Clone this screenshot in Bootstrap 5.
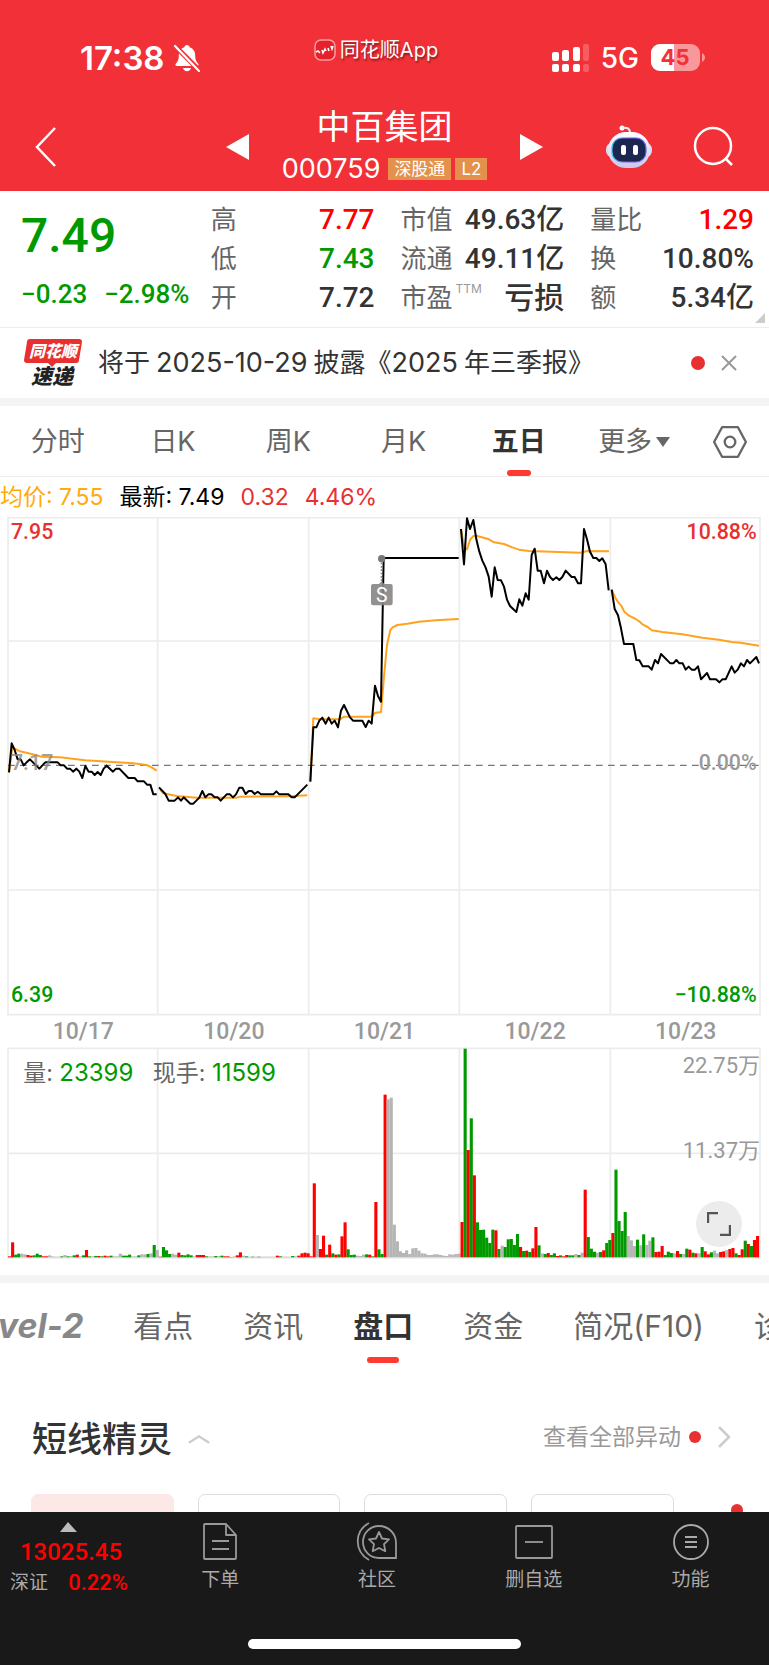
<!DOCTYPE html>
<html lang="zh-CN">
<head>
<meta charset="utf-8">
<meta name="viewport" content="width=device-width, initial-scale=1">
<title>中百集团 000759</title>
<link rel="stylesheet" href="https://cdn.jsdelivr.net/npm/bootstrap@5.3.0/dist/css/bootstrap.min.css">
<style>
:root{--up:#f00;--down:#090;--brand:#f23037;--ink:#333;--muted:#666;--soft:#999;--rule:#ececec}
body{font-family:Inter,"Noto Sans CJK SC",sans-serif;color:var(--ink);background:#fff;overflow-x:hidden}
button{background:none;border:0;padding:0;color:inherit;font:inherit}
svg{display:block}
svg text{font-family:Roboto,"Noto Sans CJK SC",sans-serif}
svg text.lbl{font-family:Inter,"Noto Sans CJK SC",sans-serif}
a{color:inherit;text-decoration:none}
.num{font-family:Roboto,"Noto Sans CJK SC",sans-serif;font-weight:500}
.up{color:var(--up)}.down{color:var(--down)}
.app-head{background:var(--brand);color:#fff}
.status{height:96px;padding:20px 63px 0 80px;display:grid;grid-template-columns:1fr auto 1fr}
.clock{font-size:33px;font-weight:600;line-height:40px}
.brandline{font-size:20px;line-height:24px;margin:0 34px 16px 0;text-shadow:1px 2px 2px rgba(0,0,0,.45)}
.net{font-size:28px;font-weight:500;line-height:32px}
.signals{gap:12px}
.titlebar{height:95px;padding:7px 34px 0;display:grid;grid-template-columns:1fr auto 1fr}
.switcher{width:318px}
.stock{font-size:34px;line-height:44px;font-weight:400;margin:0}
.code{font-size:27px;line-height:40px}
.tagbox{background:#e4924b;font-size:17px;line-height:22px;padding:0 6px}
.quote{display:grid;grid-template-columns:repeat(4,minmax(0,1fr));column-gap:26px;padding:9px 15px 10px 21px;border-bottom:1px solid var(--rule);position:relative}
.quote dl{margin:0}
.quote dl>div{height:39px;display:flex;justify-content:space-between;align-items:center;white-space:nowrap}
.quote dt{font-weight:400;font-size:26px;color:var(--muted);line-height:39px}
.quote dd{margin:0;font-size:28px;line-height:39px}
.quote dd.wordy{font-size:30px}
.price{font-size:48px;line-height:72px}
.change{font-size:26px;line-height:45px;white-space:nowrap;gap:17px}
.ttm{font-size:12px;color:var(--soft);top:-14px;margin-left:3px}
.corner{position:absolute;right:4px;bottom:4px}
.notice{height:70px;padding:0 32px 0 24px;font-size:26px}
.digits{font-size:27px;margin:0 6px}
.dot{width:14px;height:14px;border-radius:50%;background:#e93030;flex:none}
.dot-sm{width:12px;height:12px}
.band{height:8px;background:#f4f4f4}
.periods{height:71px;border-bottom:1px solid var(--rule);font-size:27px;color:var(--muted)}
.periods button{flex:115 1 0;height:70px;padding-top:2px;position:relative}
.periods .gear{flex-grow:77}
.active-tab{color:var(--ink);font-weight:700!important}
.active-tab::after{content:"";position:absolute;left:50%;bottom:0;width:24px;height:6px;margin-left:-12px;border-radius:3px;background:#ff3a30}
.legendline{height:40px;font-size:23px;line-height:40px;gap:16px}
.crimson{color:#e93030}.amber{color:#ffab0c}
.dates{height:30px;padding:0 8px;font-size:23px;line-height:30px;color:var(--soft)}
.expand{position:absolute;right:27px;bottom:12px;width:46px;height:46px;border-radius:50%;background:#ececec!important}
.sections{height:96px;gap:50px;font-size:30px;line-height:86px;color:var(--muted);overflow:hidden;white-space:nowrap}
.sections a{position:relative;height:80px}
.sections .active-tab::after{width:32px;margin-left:-16px}
.levelname{font-size:34px;font-weight:700;font-style:italic;color:#888;margin-left:-41px}
.spirit{height:115px;padding:36px 38px 0 32px}
.spirit h2{font-size:35px;font-weight:500;margin:0;line-height:48px}
.more{font-size:23px;color:var(--soft);line-height:44px}
.strip{height:18px;overflow:hidden;padding:0 26px 0 31px}
.chip{flex:143 1 0;height:80px;border:1px solid #ddd;border-radius:7px}
.chip.on{background:#fde8e8;border-color:#fde8e8}
.tail{flex:46 1 0;height:80px;padding-top:10px}
.tabbar{background:#191919;color:#aaa;height:153px;font-size:19px}
.tabs a,.tabs button{flex:1;display:flex;flex-direction:column;align-items:center;height:90px;padding-top:10px}
.tabs svg{height:39px;margin-bottom:5px}
.index{width:142px;height:84px;padding-top:10px}
.index svg{height:10px;margin-left:60px}
.points{font-size:24px;line-height:24px}
.indexrow{padding:5px 14px 0 10px;line-height:28px}
.indexrow .num{font-size:22px}
.home{width:273px;height:10px;border-radius:5px;background:#fff;margin:37px auto 0}
</style>
<script src="https://cdn.jsdelivr.net/npm/bootstrap@5.3.0/dist/js/bootstrap.bundle.min.js"></script>
</head>
<body>
<header class="app-head">
  <div class="status align-items-center">
    <div class="d-flex align-items-center gap-2">
      <span class="clock">17:38</span>
      <svg width="28" height="30" viewBox="0 0 28 30"><path fill="#fff" d="M14 2c-1.500 0-2.400 1-2.600 2.200C7.500 5.500 5.800 8.600 5.800 12.500c0 5-1.600 6.600-3 8.200-.8 1-.3 2.300 1 2.300h20.400c1.300 0 1.800-1.300 1-2.300-1.400-1.600-3-3.200-3-8.200 0-3.900-1.700-7-5.600-8.300C16.400 3 15.500 2 14 2zM10 25h8c-.4 2-2 3.200-4 3.200S10.400 27 10 25z"/><path stroke="#f23037" stroke-width="5" d="M1 2l26 26"/><path stroke="#fff" stroke-width="2.200" stroke-linecap="round" d="M2 3l24 25"/></svg>
    </div>
    <div class="brandline d-flex align-items-center gap-1">
      <svg width="22" height="22" viewBox="0 0 22 22"><rect x="1" y="1" width="20" height="20" rx="6" fill="#e8202a" stroke="#f5a0a3" stroke-width="1.500"/><path fill="none" stroke="#fff" stroke-width="1.600" d="M2 13l2-1 2 2M8 11l1 3 2-4 1 2M14 9l1 3M17 7l1 3 1-3"/></svg>
      <span>同花顺App</span>
    </div>
    <div class="signals d-flex align-items-center justify-content-end">
      <svg width="37" height="28" viewBox="0 0 37 28" fill="#fff"><rect y="8" width="7" height="9" rx="2"/><rect x="10" y="6" width="7" height="11" rx="2"/><rect x="21" y="3" width="7" height="14" rx="2"/><rect x="31" width="6" height="17" rx="2" opacity=".22"/><rect y="20" width="7" height="8" rx="2"/><rect x="10" y="20" width="7" height="8" rx="2"/><rect x="21" y="20" width="7" height="8" rx="2"/><rect x="31" y="20" width="6" height="8" rx="2" opacity=".22"/></svg>
      <span class="net">5G</span>
      <svg width="55" height="28" viewBox="0 0 55 28"><defs><clipPath id="cell"><rect width="49" height="27" rx="9"/></clipPath></defs><g clip-path="url(#cell)"><path fill="#f9989b" d="M0 0h49v27H0z"/><path fill="#fff" d="M0 0h23v27H0z"/></g><path fill="#f9989b" d="M51 9c4 2 4 7 0 9z"/><text class="lbl" x="24" y="21" text-anchor="middle" font-size="22" font-weight="700" fill="#f23037">45</text></svg>
    </div>
  </div>
  <div class="titlebar align-items-center">
    <button class="text-start" aria-label="返回"><svg width="24" height="40" viewBox="0 0 24 40"><path d="M21 1L3 20l18 19" fill="none" stroke="#fff" stroke-width="2.500"/></svg></button>
    <div class="switcher d-flex justify-content-between align-items-center">
      <button aria-label="上一只"><svg width="23" height="26"><path fill="#fff" d="M23 0v26L0 13z"/></svg></button>
      <div class="text-center">
        <h1 class="stock">中百集团</h1>
        <div class="d-flex align-items-center"><span class="code me-2">000759</span><span class="tagbox me-1">深股通</span><span class="tagbox">L2</span></div>
      </div>
      <button aria-label="下一只"><svg width="23" height="26"><path fill="#fff" d="M0 0v26l23-13z"/></svg></button>
    </div>
    <div class="d-flex justify-content-end align-items-center gap-4">
      <button class="me-3" aria-label="智能助手"><svg width="48" height="44" viewBox="0 0 48 44"><defs><linearGradient id="shell" x2="0" y2="1"><stop stop-color="#fff"/><stop offset="1" stop-color="#c9c8ee"/></linearGradient><linearGradient id="edge"><stop stop-color="#38c5e8"/><stop offset=".5" stop-color="#8b4bef"/><stop offset="1" stop-color="#5b6bf2"/></linearGradient></defs><circle cx="17" cy="3" r="2.500" fill="#fff"/><path d="M17 3c6-1 8 1 8 5" fill="none" stroke="#eeeefb" stroke-width="2"/><rect x="1" y="18" width="46" height="14" rx="6" fill="#d9d9f5"/><rect x="3" y="7" width="42" height="36" rx="18" fill="url(#shell)"/><rect x="7" y="13" width="34" height="24" rx="10" fill="#1c2750" stroke="url(#edge)" stroke-width="1.200"/><rect x="16" y="20" width="5" height="10" rx="2" fill="#fff"/><rect x="28" y="20" width="5" height="10" rx="2" fill="#fff"/></svg></button>
      <button aria-label="搜索"><svg width="42" height="42" viewBox="0 0 42 42" fill="none" stroke="#fff" stroke-width="2.500"><circle cx="20" cy="20" r="18"/><path d="M32 32l7 7"/></svg></button>
    </div>
  </div>
</header>

<main>
<section class="quote">
  <div class="num down"><div class="price">7.49</div><div class="change d-flex"><span>−0.23</span><span>−2.98%</span></div></div>
  <dl><div><dt>高</dt><dd class="num up">7.77</dd></div><div><dt>低</dt><dd class="num down">7.43</dd></div><div><dt>开</dt><dd class="num">7.72</dd></div></dl>
  <dl><div><dt>市值</dt><dd class="num">49.63亿</dd></div><div><dt>流通</dt><dd class="num">49.11亿</dd></div><div><dt>市盈<sup class="ttm">TTM</sup></dt><dd class="num wordy">亏损</dd></div></dl>
  <dl><div><dt>量比</dt><dd class="num up">1.29</dd></div><div><dt>换</dt><dd class="num">10.80%</dd></div><div><dt>额</dt><dd class="num">5.34亿</dd></div></dl>
  <svg class="corner" width="10" height="10"><path fill="#ccc" d="M10 0v10H0z"/></svg>
</section>

<section class="notice d-flex align-items-center">
  <svg width="58" height="50" viewBox="0 0 58 50"><path fill="#e93030" d="M6 1h49q3 0 3 3l-3 18q0 3-3 3H32l-4 4-4-4H3q-3 0-3-3L3 4q0-3 3-3z"/><text x="29" y="19" text-anchor="middle" font-size="16" font-weight="900" font-style="italic" fill="#fff">同花顺</text><text x="28" y="46" text-anchor="middle" font-size="21" font-weight="900" font-style="italic" fill="#222">速递</text></svg>
  <a href="#notice" class="ms-3 flex-grow-1">将于<span class="digits">2025-10-29</span>披露《<span class="digits ms-0">2025</span>年三季报》</a>
  <span class="dot me-3"></span>
  <button aria-label="关闭"><svg width="16" height="16"><path d="M1 1l14 14M15 1L1 15" stroke="#999" stroke-width="2"/></svg></button>
</section>
<div class="band"></div>

<nav class="periods d-flex">
  <button>分时</button><button>日K</button><button>周K</button><button>月K</button><button class="active-tab">五日</button>
  <button class="d-flex align-items-center justify-content-center">更多<svg class="ms-1" width="14" height="10"><path fill="#666" d="M0 0h14L7 10z"/></svg></button>
  <button class="gear d-flex align-items-center justify-content-center" aria-label="设置"><svg width="36" height="34" viewBox="0 0 34 32" fill="none" stroke="#666" stroke-width="2.200"><path stroke-linejoin="round" d="M9.500 2h15L32 16l-7.500 14h-15L2 16z"/><circle cx="17" cy="16" r="5"/></svg></button>
</nav>

<div class="legendline d-flex"><span class="amber">均价: 7.55</span><span class="text-black">最新: 7.49</span><span class="crimson">0.32</span><span class="crimson">4.46%</span></div>

<svg viewBox="0 21 2307 1500" width="100%" role="img" aria-label="五日价格走势">
  <path fill="none" stroke="#ececec" stroke-width="5" d="M24 23H2280V1514H24zM473 23V1514M926 23V1514M1378 23V1514M1831 23V1514M24 393H2280M24 1140H2280"/>
  <path stroke="#777" stroke-width="4" stroke-dasharray="20 16" d="M24 766H2280"/>
  <g fill="none" stroke="#ffa31f" stroke-width="6" stroke-linejoin="round">
    <path d="M27 787L37 712 60 724 95 732 125 740 180 742 255 751 400 760 440 765 455 772 470 782"/>
    <path d="M480 838L490 850 530 858 590 863 710 863 720 860 870 859 922 856"/>
    <path d="M931 815L940 625 960 628 1020 628 1032 620 1115 620 1125 609 1143 606 1152 500 1161 405 1171 360 1178 352 1192 345 1222 341 1257 335 1307 331 1376 327"/>
    <path transform="translate(1107)" d="M276 57L285 110 294 118 303 90 312 79 322 77 360 88 375 97 405 102 430 112 450 119 480 123 635 128 655 123 720 124M728 239L740 265 748 278 756 286 766 305 780 317 800 327 812 335 822 344 836 351 848 361 880 366 940 373 1000 383 1050 389 1088 396 1115 398 1170 407"/>
  </g>
  <g fill="none" stroke="#000" stroke-width="6" stroke-linejoin="round">
    <path d="M27 787L35 700 44 720 53 748 62 748 71 766 80 757 90 748 99 757 108 766 118 776 136 757 173 757 182 766 192 766 201 776 210 776 219 785 229 776 238 785 247 804 256 768 266 785 275 785 284 795 293 786 302 795 311 776 320 767 339 785 348 776 358 776 385 804 404 804 413 814 432 814 441 824 451 824 460 853 470 853"/>
    <path d="M477 832L496 852 506 872 524 872 534 862 543 872 551 862 571 881 580 881 598 863 607 843 616 862 625 853 634 853 644 862 653 862 662 872 680 853 690 853 699 862 708 853 718 833 727 833 737 852 746 843 755 843 764 852 773 845 783 853 820 853 829 844 838 853 865 853 875 862 884 862 922 824"/>
    <path d="M931 815L940 652 949 652 958 632 967 623 977 641 986 623 995 641 1004 632 1014 652 1023 602 1032 585 1050 622 1059 632 1087 632 1097 651 1106 632 1115 641 1125 527 1134 558 1143 575 1151 144 1376 144"/>
    <path transform="translate(1107)" d="M276 57L285 163 294 25 303 57 313 30 322 88 331 125 340 152 350 173 359 200 368 260 377 172 386 210 396 211 405 230 414 269 423 288 442 306 451 268 460 287 470 250 479 269 488 135 497 116 506 182 515 182 525 220 534 182 543 201 552 210 562 202 571 210 580 201 590 182 608 201 617 201 627 220 636 220 645 57 654 88 663 125 673 144 682 144 691 153 700 145 710 163 719 241M728 239L737 297 747 316 756 355 765 402 793 402 802 450 811 451 821 469 839 469 848 479 858 450 867 460 876 432 904 460 913 460 922 450 931 460 941 460 950 479 959 470 968 479 978 479 987 469 996 508 1014 489 1023 508 1041 508 1051 517 1060 508 1070 508 1088 469 1097 488 1106 479 1116 460 1125 469 1134 450 1143 460 1162 441 1170 460"/>
  </g>
  <circle cx="1145" cy="146" r="11" fill="#777"/><path stroke="#888" stroke-width="4" stroke-dasharray="5 5" d="M1144 158V216"/>
  <path fill="#888" fill-opacity=".92" d="M1119 222h18l8-8 8 8h19q6 0 6 6v52q0 6-6 6h-53q-6 0-6-6v-52q0-6 6-6z"/>
  <text x="1145" y="275" text-anchor="middle" font-size="58" fill="#fff">S</text>
  <g font-size="64" font-weight="500">
    <text x="33" y="88" fill="#e93030">7.95</text><text x="2270" y="88" text-anchor="end" fill="#e93030">10.88%</text>
    <text x="33" y="780" fill="#888" fill-opacity=".8">7.17</text><text x="2270" y="780" text-anchor="end" fill="#999">0.00%</text>
    <text x="33" y="1475" fill="#090">6.39</text><text x="2270" y="1475" text-anchor="end" fill="#090">−10.88%</text>
  </g>
</svg>
<div class="dates num d-flex text-center"><span class="col">10/17</span><span class="col">10/20</span><span class="col">10/21</span><span class="col">10/22</span><span class="col">10/23</span></div>
<div class="position-relative">
  <svg viewBox="0 200 2307 636" width="100%" role="img" aria-label="成交量">
    <path fill="none" stroke="#ececec" stroke-width="5" d="M24 204H2280V833H24zM473 204V833M926 204V833M1378 204V833M1831 204V833M24 519H2280"/>
    <g id="volume"></g>
    <g font-size="69" fill="#666"><text class="lbl" x="70" y="301">量:</text><text class="lbl" x="458" y="301">现手:</text></g>
    <g font-size="72" fill="#090"><text class="lbl" x="178" y="301">23399</text><text class="lbl" x="636" y="301">11599</text></g>
    <g font-size="66" fill="#999" text-anchor="end"><text x="2280" y="279">22.75万</text><text x="2280" y="533">11.37万</text></g>
  </svg>
  <button class="expand" aria-label="全屏"><svg class="m-auto" width="24" height="24" viewBox="0 0 24 24" fill="none" stroke="#555" stroke-width="2.400"><path d="M1 11V1h10M23 13v10H13"/></svg></button>
</div>
<div class="band mt-3"></div>

<nav class="sections d-flex">
  <a class="levelname" href="#l2">Level-2</a><a href="#view">看点</a><a href="#news">资讯</a><a href="#pan" class="active-tab">盘口</a><a href="#fund">资金</a><a href="#f10">简况(F10)</a><a href="#diag">诊股</a>
</nav>
<section class="spirit d-flex justify-content-between align-items-start">
  <div class="d-flex align-items-center gap-3"><h2>短线精灵</h2><svg width="22" height="10" viewBox="0 0 24 10"><path d="M1 9l11-7 11 7" fill="none" stroke="#ccc" stroke-width="2.500"/></svg></div>
  <a href="#all" class="more d-flex align-items-center">查看全部异动<span class="dot dot-sm mx-2"></span><svg class="ms-2" width="14" height="22"><path d="M2 1l10 10L2 21" fill="none" stroke="#ccc" stroke-width="2.500"/></svg></a>
</section>
<div class="strip d-flex gap-4"><div class="chip on"></div><div class="chip"></div><div class="chip"></div><div class="chip"></div><div class="tail d-flex justify-content-end"><span class="dot dot-sm"></span></div></div>
</main>

<footer class="tabbar">
  <div class="tabs d-flex">
    <div class="index">
      <svg width="17" height="10" class="mb-2"><path fill="#bbb" d="M8 0l9 10H0z"/></svg>
      <div class="points num up text-center">13025.45</div>
      <div class="indexrow d-flex justify-content-between align-items-center"><span>深证</span><span class="num up">0.22%</span></div>
    </div>
    <a href="#order"><svg width="36" viewBox="0 0 36 39" fill="none" stroke="#999" stroke-width="1.800"><path stroke-linejoin="round" d="M4 2h20l10 11v23q0 1-1 1H3q-1 0-1-1V3q0-1 1-1zM24 2v11h10"/><path d="M10 19h17M10 27h17"/></svg>下单</a>
    <a href="#club"><svg width="42" viewBox="0 0 42 39" fill="none" stroke="#999" stroke-width="1.800"><path d="M23 4c9 0 17 7 17 17v15H23C14 36 7 29 7 20S14 4 23 4z"/><path d="M13 1C-2 9-2 29 13 38"/><path stroke-linejoin="round" d="M23 10l3 6.500 7 .8-5 4.900 1.300 7L23 26l-6.300 3.200 1.300-7-5-4.900 7-.8z"/></svg>社区</a>
    <button><svg width="40" viewBox="0 0 40 39" fill="none" stroke="#999" stroke-width="1.800"><rect x="2" y="4" width="36" height="32" rx="1"/><path d="M11 20h18"/></svg>删自选</button>
    <button><svg width="38" viewBox="0 0 38 39" fill="none" stroke="#aaa" stroke-width="1.800"><circle cx="19" cy="20" r="17"/><path d="M13 15h12M13 20h12M13 25h12"/></svg>功能</button>
  </div>
  <div class="home"></div>
</footer>
<script>
/* one entry per five-minute bar: colour letter (r up, g down, x flat) and height */
const bars = `r3 r45 g8 g11 x11 x9 r7 r5 g6 g11 g7 r3 r3 x6 x3 x2 x2 g3 x7 g3 x4 g6 r8 x3 g6 r22 g3 x3 g4 r4 g3 r5 r3 g5 x3 x3 x11 g5 g5 g8 x3 x3 g6 x9 x9 g10 x12 g37 x22
r2 g31 g21 g10 x11 x8 r14 g7 g6 g9 g6 x3 r7 r7 r7 g3 x3 x3 g4 x4 g5 r3 r3 g1 x3 r6 r15 x5 g3 x2 g2 x2 g2 x2 x2 x2 x2 x2 r5 g3 x2 x2 x2 g4 x3 r5 r12 r14 r12
r3 r222 x67 r25 r65 g8 r38 g12 r8 g9 r63 r105 g24 g7 g8 x5 x4 x8 g9 r8 g3 r166 g24 g10 r488 x474 x479 x98 x48 x18 x13 x21 x10 x27 x28 x20 x12 x11 x7 x7 x9 x9 x7 x5 x4 x9 x8 x10 x11
r106 g626 r322 g417 r246 g105 g82 g83 g59 g43 g83 r81 g25 x35 g31 g54 g55 g37 g70 r31 g19 r20 g16 r27 r91 g36 x12 g10 r13 g7 g12 r4 g6 r3 r7 g6 g6 x10 g7 x14 r203 g61 g26 g17 x14 g16 r21 g43 g52
r73 g263 g109 g79 g136 x64 x51 x34 g53 x36 g69 x37 x50 g60 r16 r17 r34 g7 g17 g13 x12 r19 g10 x10 g26 r23 g14 r12 x12 g31 r18 r9 g15 x20 x12 r16 r18 x22 r25 r28 g12 r7 r24 g50 r40 g34 r52 r64`;
const fills = {r:"#f00", g:"#090", x:"#b5b5b5"};
document.getElementById("volume").innerHTML = bars.split(/\s+/).map((b, i) => {
  const h = +b.slice(1);
  return `<rect x="${24 + i * 9.235}" y="${831 - h}" width="9.3" height="${h}" fill="${fills[b[0]]}"/>`;
}).join("");
</script>
</body>
</html>
